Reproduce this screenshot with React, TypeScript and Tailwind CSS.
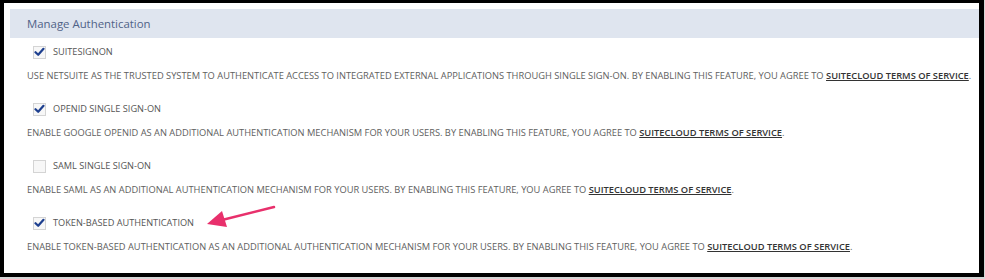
import React from "react";

const items = [
  {
    label: "SUITESIGNON",
    checked: true,
    desc: "USE NETSUITE AS THE TRUSTED SYSTEM TO AUTHENTICATE ACCESS TO INTEGRATED EXTERNAL APPLICATIONS THROUGH SINGLE SIGN-ON. BY ENABLING THIS FEATURE, YOU AGREE TO ",
  },
  {
    label: "OPENID SINGLE SIGN-ON",
    checked: true,
    desc: "ENABLE GOOGLE OPENID AS AN ADDITIONAL AUTHENTICATION MECHANISM FOR YOUR USERS. BY ENABLING THIS FEATURE, YOU AGREE TO ",
  },
  {
    label: "SAML SINGLE SIGN-ON",
    checked: false,
    desc: "ENABLE SAML AS AN ADDITIONAL AUTHENTICATION MECHANISM FOR YOUR USERS. BY ENABLING THIS FEATURE, YOU AGREE TO ",
  },
  {
    label: "TOKEN-BASED AUTHENTICATION",
    checked: true,
    desc: "ENABLE TOKEN-BASED AUTHENTICATION AS AN ADDITIONAL AUTHENTICATION MECHANISM FOR YOUR USERS. BY ENABLING THIS FEATURE, YOU AGREE TO ",
  },
];

function Checkbox({ checked }: { checked: boolean }) {
  return (
    <div className="w-[13px] h-[13px] border border-[#d4d4d4] bg-[#f7f7f7] flex items-center justify-center">
      {checked && (
        <svg width="11" height="10" viewBox="0 0 11 10">
          <path d="M1.5 5.2 L4.2 7.8 L9.5 1.8" fill="none" stroke="#1d3f8f" strokeWidth="2.2" strokeLinecap="round" strokeLinejoin="round" />
        </svg>
      )}
    </div>
  );
}

export default function App() {
  return (
    <div className="w-[985px] h-[279px] bg-[#d6d6d6]" style={{ fontFamily: '"Open Sans", sans-serif' }}>
      <div className="relative w-[984px] h-[277px] border-l-4 border-t-[3px] border-r-[5px] border-b-4 border-black bg-white pt-[6px] pl-[6px]">
        <div className="h-[29px] bg-[#dfe5ef] flex items-center pl-[17px] text-[11.4px] text-[#4f6287]">
          Manage Authentication
        </div>
        <div className="pt-[5px]">
          {items.map((it) => (
            <div key={it.label} className="h-[57px]">
              <div className="h-[18px] flex items-center pl-[23px] gap-[7px]">
                <Checkbox checked={it.checked} />
                <span className="text-[9.2px] text-[#555]">{it.label}</span>
              </div>
              <div className="mt-[8px] h-[14px] flex items-center pl-[17px] text-[9.3px] text-[#606060] whitespace-nowrap">
                <span>
                  {it.desc}
                  <span className="font-semibold underline text-[#333]">SUITECLOUD TERMS OF SERVICE</span>.
                </span>
              </div>
            </div>
          ))}
        </div>
        <svg className="absolute left-[198px] top-[195px]" width="84" height="32" viewBox="0 0 84 32">
          <line x1="72" y1="9" x2="20" y2="22" stroke="#e8306c" strokeWidth="2.5" strokeLinecap="round" />
          <path d="M5 26 L20 13 L25 29 Z" fill="#e8306c" />
        </svg>
      </div>
    </div>
  );
}
